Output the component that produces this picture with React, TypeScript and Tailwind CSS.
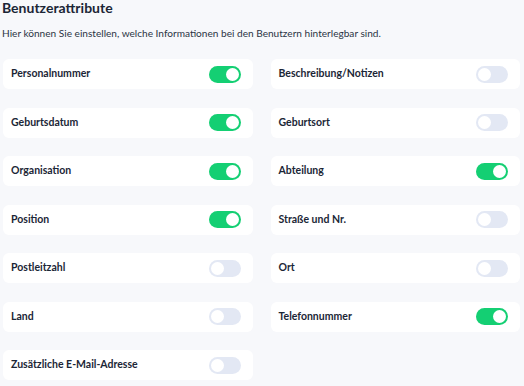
const attributes: { label: string; on: boolean }[][] = [
  [
    { label: "Personalnummer", on: true },
    { label: "Beschreibung/Notizen", on: false },
  ],
  [
    { label: "Geburtsdatum", on: true },
    { label: "Geburtsort", on: false },
  ],
  [
    { label: "Organisation", on: true },
    { label: "Abteilung", on: true },
  ],
  [
    { label: "Position", on: true },
    { label: "Straße und Nr.", on: false },
  ],
  [
    { label: "Postleitzahl", on: false },
    { label: "Ort", on: false },
  ],
  [
    { label: "Land", on: false },
    { label: "Telefonnummer", on: true },
  ],
  [{ label: "Zusätzliche E-Mail-Adresse", on: false }],
];

export default function App() {
  return (
    <main className="h-[386px] w-[524px] overflow-hidden bg-[#f7f8fb] px-[2px] font-['Lato',sans-serif] text-[#1b2636]">
      <h1 className="text-[14px] font-bold leading-[16px]">Benutzerattribute</h1>
      <p className="mt-[11px] text-[10.1px] leading-[13px] text-[#2a3444]">
        Hier können Sie einstellen, welche Informationen bei den Benutzern hinterlegbar sind.
      </p>
      <div className="mt-[19px] grid grid-cols-2 gap-x-[18px] gap-y-[18.5px] pl-px pr-[2px]">
        {attributes.flat().map((a) => (
          <AttributeCard key={a.label} label={a.label} on={a.on} />
        ))}
      </div>
    </main>
  );
}

function AttributeCard({ label, on }: { label: string; on: boolean }) {
  return (
    <div className="flex h-[30px] items-center justify-between rounded-[6px] bg-white pl-[8px] pr-[12px]">
      <span className="text-[10.5px] font-bold text-[#1b2636]">{label}</span>
      <span
        className={`flex h-[17px] w-[32px] items-center rounded-full px-[2px] ${
          on ? "justify-end bg-[#14cf73]" : "justify-start bg-[#e3e8f4]"
        }`}
      >
        <span className="h-[13px] w-[13px] rounded-full bg-white" />
      </span>
    </div>
  );
}
